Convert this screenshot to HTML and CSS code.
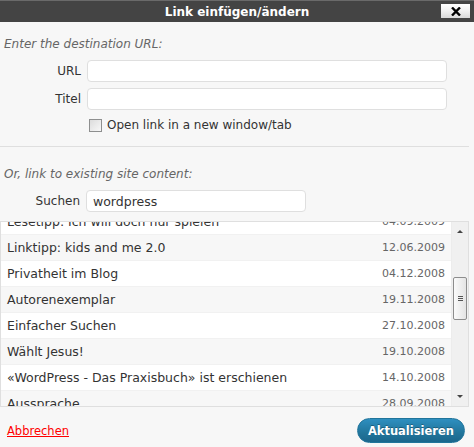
FILE: index.html
```html
<!DOCTYPE html>
<html lang="de">
<head>
<meta charset="utf-8">
<title>Link einfügen/ändern</title>
<link rel="stylesheet" href="styles.css">
</head>
<body>
<div class="dialog">
  <div class="titlebar">
    <span class="title">Link einfügen/ändern</span>
    <button class="close" type="button" aria-label="Schließen">
      <svg width="10" height="9" viewBox="0 0 10 9"><path d="M1 0.5 L9 8.5 M9 0.5 L1 8.5" stroke="#000" stroke-width="2.4" fill="none"/></svg>
    </button>
  </div>

  <div class="content">
    <section class="url-section">
      <p class="howto">Enter the destination URL:</p>
      <div class="field">
        <label class="field-label" for="url">URL</label>
        <input class="text-input wide" id="url" type="text">
      </div>
      <div class="field">
        <label class="field-label" for="titel">Titel</label>
        <input class="text-input wide" id="titel" type="text">
      </div>
      <div class="field">
        <span class="field-label"></span>
        <label class="check"><span class="checkbox"></span>Open link in a new window/tab</label>
      </div>
    </section>

    <div class="divider"></div>

    <section class="search-section">
      <p class="howto">Or, link to existing site content:</p>
      <div class="field">
        <label class="field-label search-label" for="search">Suchen</label>
        <input class="text-input narrow" id="search" type="text" value="wordpress">
      </div>
    </section>

    <div class="results">
      <div class="results-viewport">
        <ul class="results-list">
          <li class="item"><span class="item-title">Lesetipp: Ich will doch nur spielen</span><span class="item-date">04.09.2009</span></li>
          <li class="item alt"><span class="item-title">Linktipp: kids and me 2.0</span><span class="item-date">12.06.2009</span></li>
          <li class="item"><span class="item-title">Privatheit im Blog</span><span class="item-date">04.12.2008</span></li>
          <li class="item alt"><span class="item-title">Autorenexemplar</span><span class="item-date">19.11.2008</span></li>
          <li class="item"><span class="item-title">Einfacher Suchen</span><span class="item-date">27.10.2008</span></li>
          <li class="item alt"><span class="item-title">Wählt Jesus!</span><span class="item-date">19.10.2008</span></li>
          <li class="item"><span class="item-title">«WordPress - Das Praxisbuch» ist erschienen</span><span class="item-date">14.10.2008</span></li>
          <li class="item alt"><span class="item-title">Aussprache</span><span class="item-date">28.09.2008</span></li>
        </ul>
      </div>
      <div class="scrollbar">
        <span class="arrow up"></span>
        <div class="track">
          <div class="thumb"><span class="grip"></span></div>
        </div>
        <span class="arrow down"></span>
      </div>
    </div>
  </div>

  <div class="footer">
    <a class="cancel" href="#">Abbrechen</a>
    <button class="primary" type="button">Aktualisieren</button>
  </div>
</div>
</body>
</html>
```
FILE: styles.css
```css
html, body {
  margin: 0;
  padding: 0;
  background: #f7f7f7;
}

body {
  font-family: "DejaVu Sans", Verdana, sans-serif;
  font-size: 12px;
  color: #333;
}

.dialog {
  width: 474px;
  height: 447px;
  display: flex;
  flex-direction: column;
  background: #f7f7f7;
}

/* title bar */
.titlebar {
  height: 22px;
  box-sizing: border-box;
  background: #444;
  border-top: 1px solid #6a6a6a;
  display: flex;
  align-items: center;
  justify-content: center;
  position: relative;
}

.title {
  color: #fff;
  font-weight: bold;
  font-size: 12px;
}

.close {
  position: absolute;
  right: 4px;
  top: 3px;
  width: 29px;
  height: 14px;
  padding: 0;
  border: 0;
  background: linear-gradient(#ffffff, #f0f0f0 50%, #d9d9d9);
  display: flex;
  align-items: center;
  justify-content: center;
}

/* main content */
.content {
  padding: 0 5px 0 0;
  display: flex;
  flex-direction: column;
}

.howto {
  margin: 0;
  padding-left: 4px;
  font-style: italic;
  color: #666;
  font-size: 12px;
  line-height: 14px;
}

.url-section {
  padding-top: 15px;
}

.url-section .howto {
  margin-bottom: 9px;
}

.field {
  display: flex;
  align-items: center;
  margin-bottom: 6px;
}

.field-label {
  width: 81px;
  flex: none;
  text-align: right;
  margin-right: 6px;
  color: #333;
}

.search-label {
  width: 80px;
}

.text-input {
  box-sizing: border-box;
  height: 22px;
  border: 1px solid #dfdfdf;
  border-radius: 4px;
  background: #fff;
  font-family: inherit;
  font-size: 12.5px;
  color: #333;
  padding: 0 6px;
  outline: none;
}

.wide {
  width: 360px;
}

.narrow {
  width: 220px;
}

.check {
  display: flex;
  align-items: center;
  margin-left: 2px;
  margin-top: 2px;
  color: #333;
  font-size: 12px;
}

.checkbox {
  width: 11px;
  height: 11px;
  border: 1px solid #8e8f8f;
  background: linear-gradient(135deg, #dcdcdc, #f8f8f8);
  margin-right: 5px;
  flex: none;
}

.divider {
  height: 1px;
  background: #dfdfdf;
  margin-top: 8px;
}

.search-section {
  padding-top: 20px;
}

.search-section .howto {
  margin-bottom: 9px;
}

.search-section .field {
  margin-bottom: 9px;
}

/* results list */
.results {
  height: 186px;
  box-sizing: border-box;
  border: 1px solid #dfdfdf;
  background: #fff;
  display: flex;
}

.results-viewport {
  flex: 1;
  overflow: hidden;
}

.results-list {
  list-style: none;
  margin: -13px 0 0 0;
  padding: 0;
}

.item {
  height: 26px;
  box-sizing: border-box;
  border-bottom: 1px solid #f1f1f1;
  display: flex;
  align-items: center;
  justify-content: space-between;
  padding: 0 6px;
  background: #fff;
  font-size: 12.5px;
  color: #333;
}

.item.alt {
  background: #f7f7f7;
}

.item-date {
  font-size: 11px;
  color: #666;
}

.scrollbar {
  width: 16px;
  flex: none;
  background: #f0f0f0;
  border-left: 1px solid #ececec;
  display: flex;
  flex-direction: column;
  align-items: center;
}

.arrow {
  width: 0;
  height: 0;
  border-left: 3px solid transparent;
  border-right: 3px solid transparent;
  margin: 8px 0;
}

.arrow.up {
  border-bottom: 3px solid #444;
}

.arrow.down {
  border-top: 3px solid #444;
}

.track {
  flex: 1;
  width: 100%;
  padding-top: 36px;
}

.thumb {
  width: 14px;
  height: 43px;
  box-sizing: border-box;
  border: 1px solid #8d8d8d;
  border-radius: 2px;
  background: linear-gradient(90deg, #fafafa, #e4e4e4);
  display: flex;
  align-items: center;
  justify-content: center;
  margin-left: 1px;
}

.grip {
  width: 5px;
  height: 5px;
  background: repeating-linear-gradient(#555 0 1px, transparent 1px 2px);
}

/* footer */
.footer {
  flex: 1;
  display: flex;
  align-items: center;
  justify-content: space-between;
  padding: 7px 9px 0 7px;
}

.cancel {
  color: #f00;
  text-decoration: underline;
  font-size: 11.5px;
}

.primary {
  height: 25px;
  padding: 0 10px;
  border: 1px solid #21759b;
  border-radius: 13px;
  background: linear-gradient(#2e8fc0, #21759b 60%, #1b668c);
  color: #fff;
  font-family: inherit;
  font-weight: bold;
  font-size: 11.5px;
  text-shadow: 0 -1px 0 rgba(0,0,0,0.3);
}
```
